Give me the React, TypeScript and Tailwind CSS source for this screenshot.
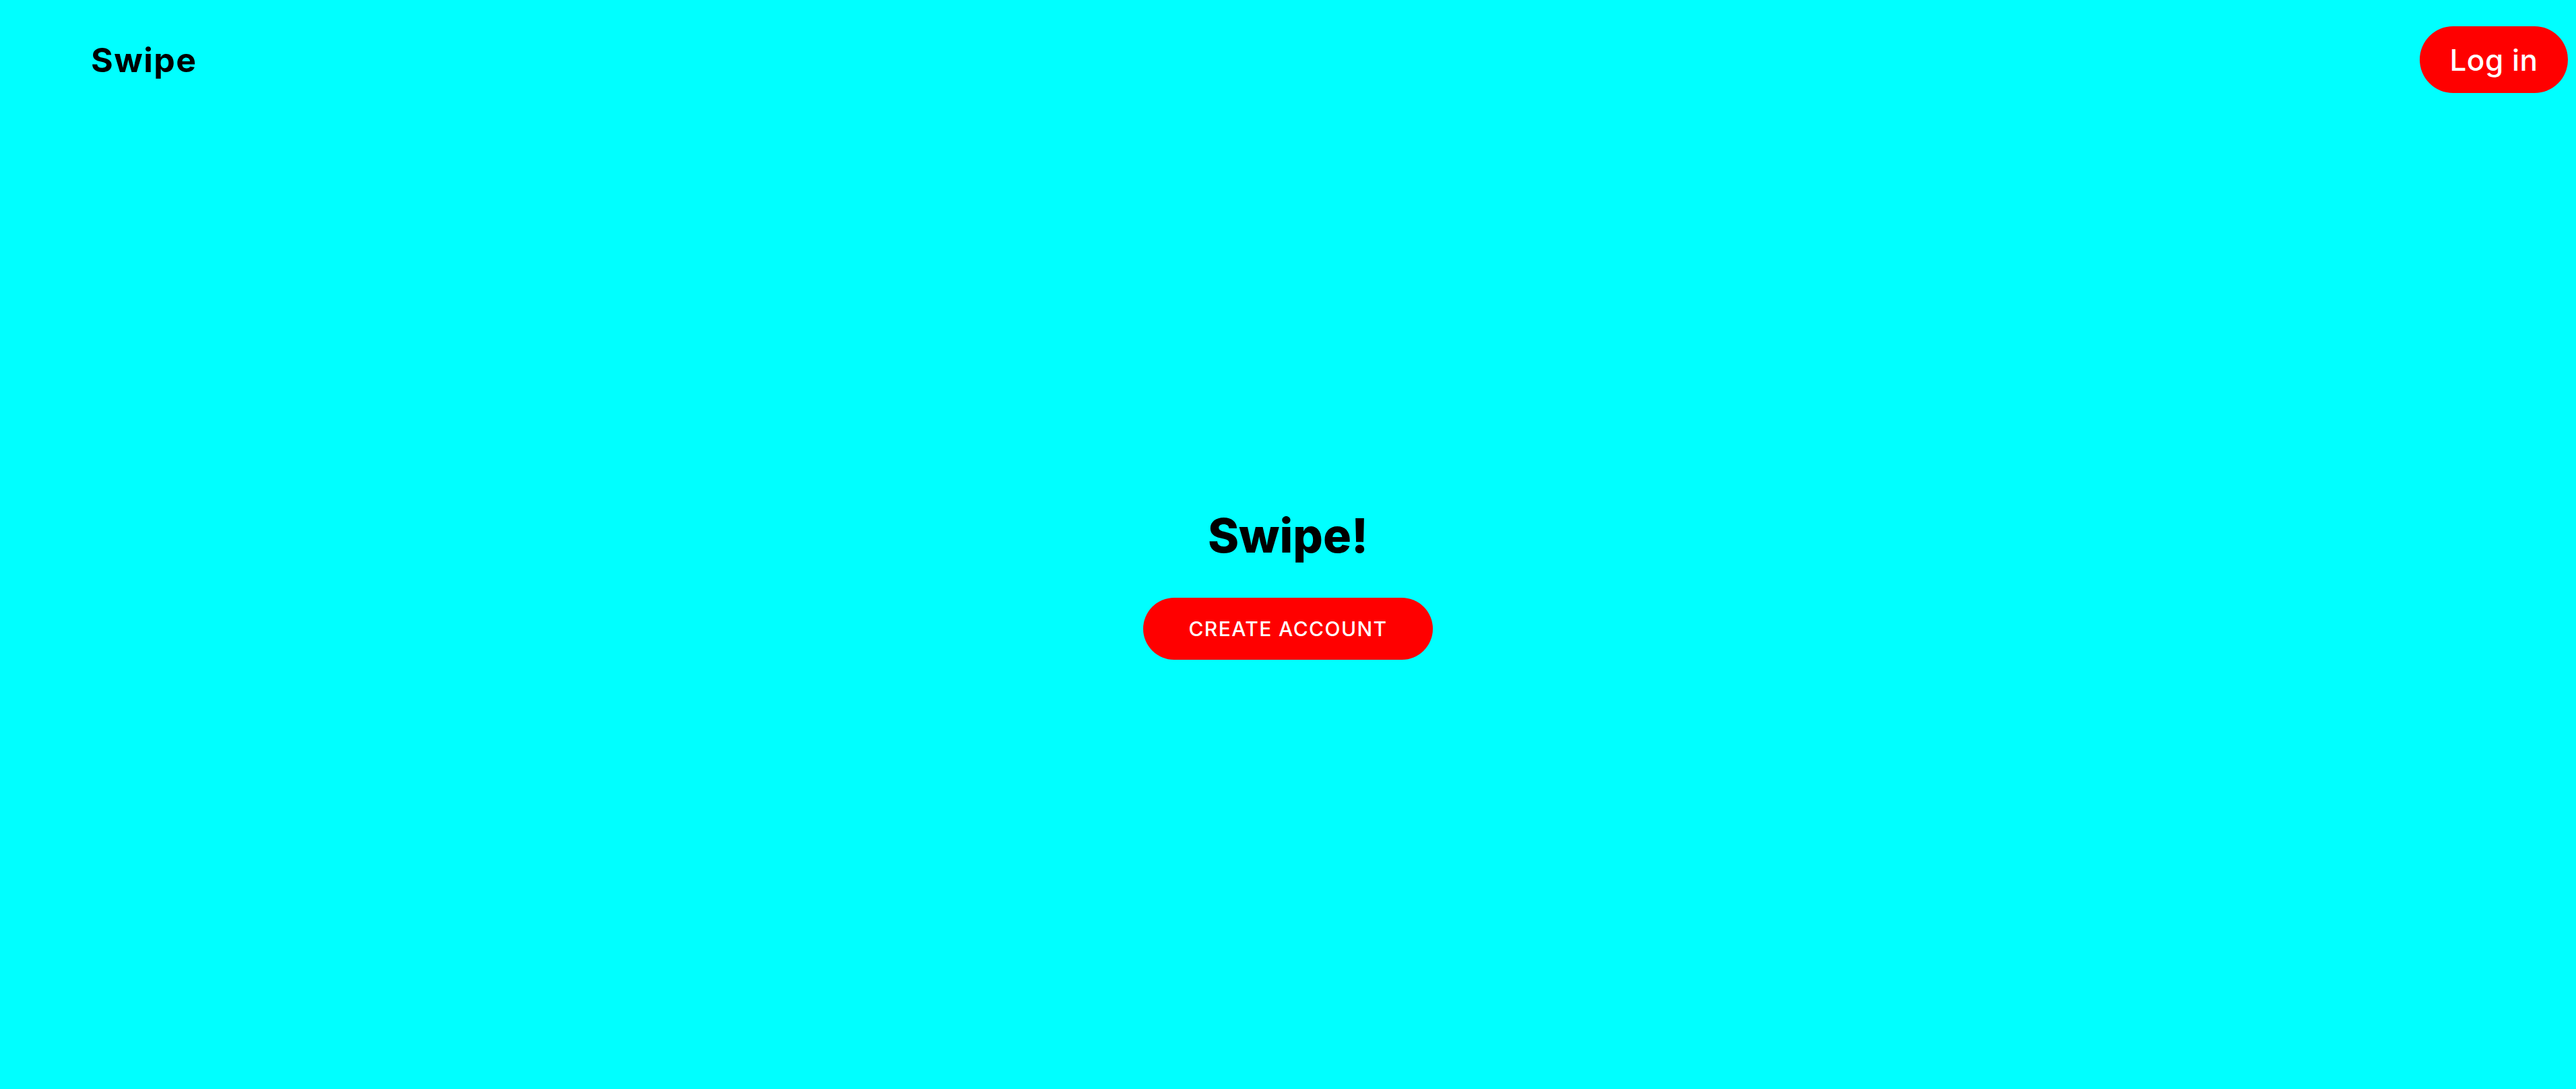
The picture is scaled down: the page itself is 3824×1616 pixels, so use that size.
export default function App() {
  return (
    <div
      className="flex h-[1616px] w-full flex-col bg-[#00ffff]"
      style={{ fontFamily: 'Inter, "Noto Sans", sans-serif' }}
    >
      <nav className="flex items-center justify-between pl-[135px] pr-[12px] pt-[39px]">
        <a href="#" className="text-[50px] font-bold leading-none tracking-[1.5px] text-black">
          Swipe
        </a>
        <button className="flex h-[99px] w-[220px] items-center justify-center rounded-full bg-[#ff0000] text-[44px] font-medium leading-none tracking-[0.5px] text-white">
          Log in
        </button>
      </nav>

      <main className="flex flex-col items-center pt-[622px]">
        <h1 className="text-[70px] font-extrabold leading-none text-black">Swipe!</h1>
        <button className="mt-[57px] flex h-[92px] items-center rounded-full bg-[#ff0000] px-[67px] text-[30px] font-medium uppercase leading-none tracking-[1.4px] text-white">
          Create account
        </button>
      </main>
    </div>
  );
}
